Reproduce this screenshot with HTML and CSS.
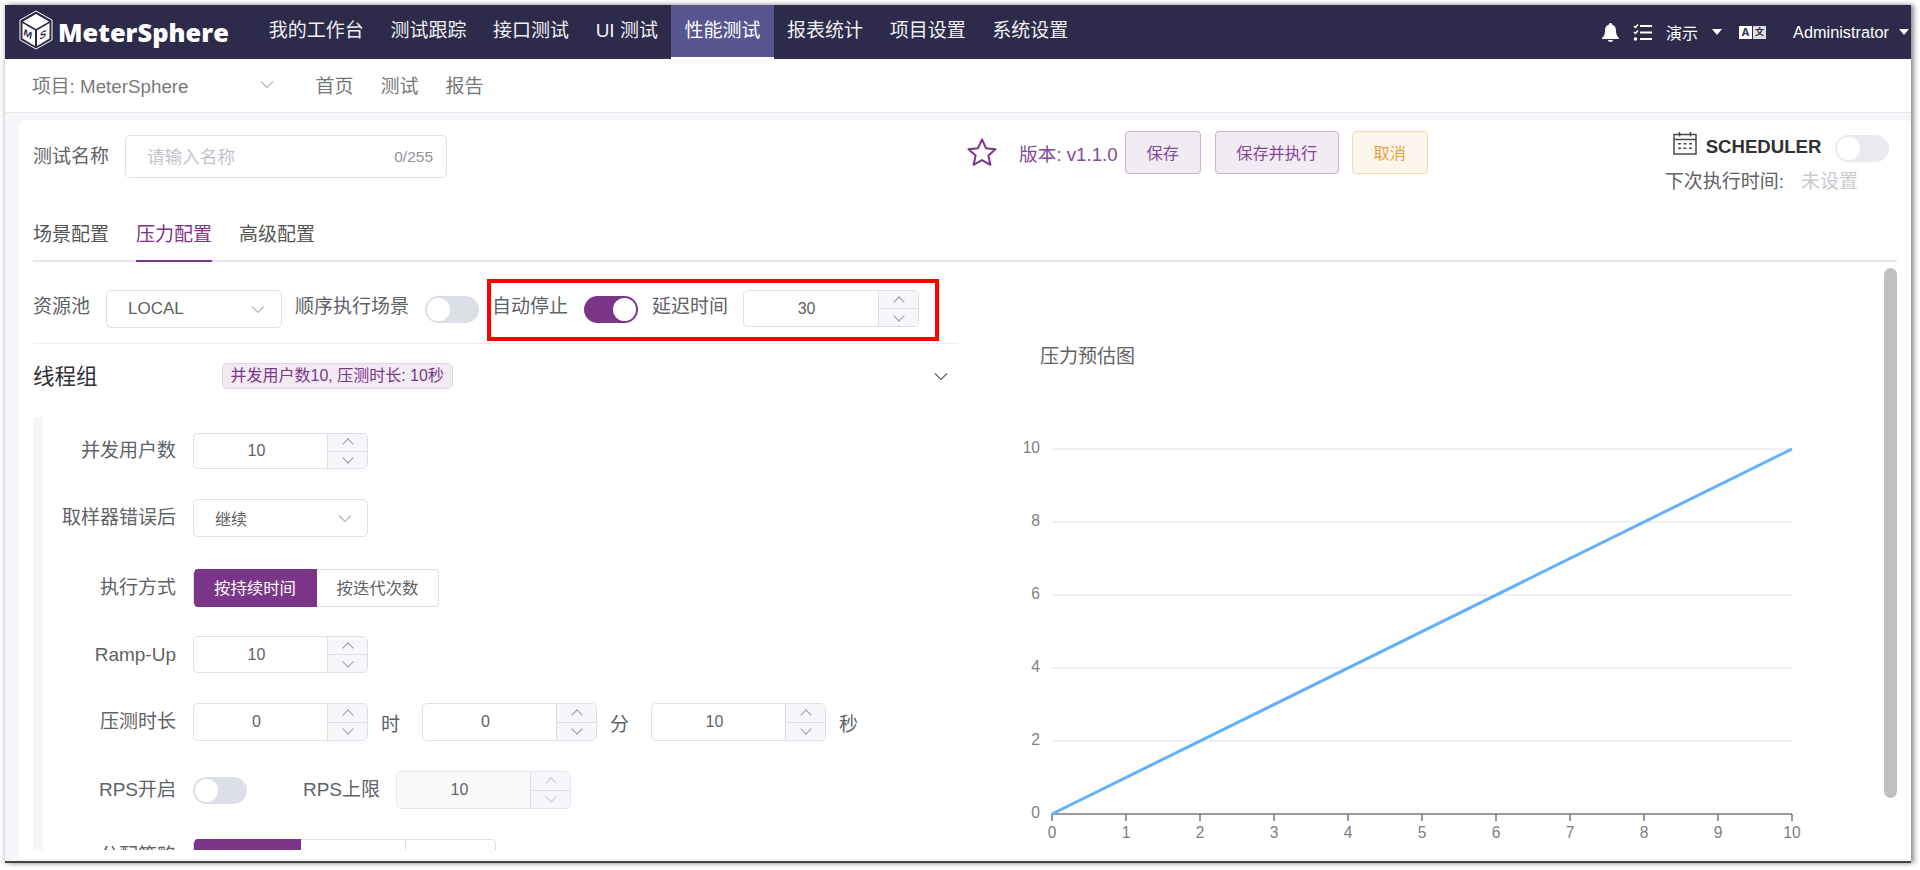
FILE: index.html
```html
<!DOCTYPE html>
<html lang="zh-CN">
<head>
    <meta charset="UTF-8">
    <title>MeterSphere</title>
    <link rel="stylesheet" href="styles.css">
</head>
<body>
<div class="window">

    <!-- Barra superior -->
    <header class="topbar">
        <div class="logo">
            <svg class="logo-icon" viewBox="0 0 36 40" width="36" height="40">
                <path d="M18 1 34 10V30L18 39 2 30V10Z" fill="none" stroke="#fff" stroke-width="1"/>
                <path d="M18 4 31 11.500 18 19 5 11.500Z" fill="#fff"/>
                <path d="M4.500 13 17 20.500V36L4.500 28.500Z" fill="#fff"/>
                <path d="M19 20.500 31.500 13V28.500L19 36Z" fill="#fff"/>
                <text class="logo-letter" transform="matrix(1 .55 0 1 5.500 25)">M</text>
                <text class="logo-letter" transform="matrix(1 -.55 0 1 21.500 30)">S</text>
            </svg>
            <span class="logo-text">MeterSphere</span>
        </div>
        <nav class="main-nav">
            <a href="#">我的工作台</a>
            <a href="#">测试跟踪</a>
            <a href="#">接口测试</a>
            <a href="#">UI 测试</a>
            <a href="#" class="active">性能测试</a>
            <a href="#">报表统计</a>
            <a href="#">项目设置</a>
            <a href="#">系统设置</a>
        </nav>
        <div class="topbar-right">
            <svg class="icon-bell" viewBox="0 0 17 19" width="17" height="19">
                <path d="M8.500 0C9.500 0 10 .7 10 1.600 12.800 2.400 14 4.800 14 7.500 14 11 15 13.500 17 15V16H0V15C2 13.500 3 11 3 7.500 3 4.800 4.200 2.400 7 1.600 7 .7 7.500 0 8.500 0Z" fill="#fff"/>
                <path d="M6 17H11C11 18.200 9.800 19 8.500 19S6 18.200 6 17Z" fill="#fff"/>
            </svg>
            <svg class="icon-tasks" viewBox="0 0 19 17" width="19" height="17">
                <path d="M1 2 2.500 3.500 5 .5M1 8 2.500 9.500 5 6.500" fill="none" stroke="#fff" stroke-width="1.500"/>
                <circle cx="2.500" cy="15" r="1.800" fill="#fff"/>
                <path d="M7 1H19V3H7ZM7 7.500H19V9.500H7ZM7 14H19V16H7Z" fill="#fff"/>
            </svg>
            <span class="workspace">演示</span>
            <i class="caret"></i>
            <span class="lang-icon"><b>A</b><b class="lang-dark">文</b></span>
            <span class="user">Administrator</span>
            <i class="caret"></i>
        </div>
    </header>

    <!-- Barra do projeto -->
    <div class="subbar">
        <div class="project">
            <span>项目: MeterSphere</span>
            <svg class="chevron" viewBox="0 0 14 7" width="14" height="7"><path d="M1 .5 7 6.500 13 .5"/></svg>
        </div>
        <a href="#">首页</a>
        <a href="#">测试</a>
        <a href="#">报告</a>
    </div>

    <div class="page">
        <div class="card">

            <div class="head">
                <span class="label">测试名称</span>
                <div class="name-input">
                    <span class="placeholder">请输入名称</span>
                    <span class="count">0/255</span>
                </div>
                <svg class="star" viewBox="0 0 30 28" width="30" height="28">
                    <path d="M15 1.500 19 10.200 28.500 11.200 21.400 17.600 23.400 26.800 15 22.100 6.600 26.800 8.600 17.600 1.500 11.200 11 10.200Z" fill="none" stroke="#7b3589" stroke-width="2" stroke-linejoin="round"/>
                </svg>
                <span class="version">版本: v1.1.0</span>
                <button class="btn btn-save">保存</button>
                <button class="btn btn-run">保存并执行</button>
                <button class="btn btn-cancel">取消</button>
                <div class="scheduler">
                    <div class="scheduler-top">
                        <svg class="calendar" viewBox="0 0 24 24" width="24" height="24">
                            <path d="M1 3.500H23V23H1ZM1 8.500H23M6.500 1V5.500M17.500 1V5.500" fill="none" stroke="#4a4a4a" stroke-width="1.500"/>
                            <path d="M5 12H8V13.500H5ZM10.500 12H13.500V13.500H10.500ZM16 12H19V13.500H16ZM5 16.500H8V18H5ZM10.500 16.500H13.500V18H10.500ZM16 16.500H19V18H16Z" fill="#4a4a4a"/>
                        </svg>
                        <b class="scheduler-title">SCHEDULER</b>
                        <span class="switch switch-light"></span>
                    </div>
                    <div class="next-run">下次执行时间:<span>未设置</span></div>
                </div>
            </div>

            <div class="tabs">
                <a href="#">场景配置</a>
                <a href="#" class="active">压力配置</a>
                <a href="#">高级配置</a>
            </div>

            <div class="body">
                <div class="left">
                    <div class="pool-row">
                        <span class="label">资源池</span>
                        <div class="select select-pool">LOCAL<svg class="chevron" viewBox="0 0 14 7" width="14" height="7"><path d="M1 .5 7 6.500 13 .5"/></svg></div>
                        <span class="label">顺序执行场景</span>
                        <span class="switch"></span>
                        <span class="label">自动停止</span>
                        <span class="switch on"></span>
                        <span class="label">延迟时间</span>
                        <div class="number">
                            <span class="value">30</span>
                            <span class="spin"><i class="up"></i><i class="down"></i></span>
                        </div>
                        <div class="highlight"></div>
                    </div>

                    <div class="group-head">
                        <span class="group-title">线程组</span>
                        <span class="tag">并发用户数10, 压测时长: 10秒</span>
                        <svg class="chevron" viewBox="0 0 14 7" width="14" height="7"><path d="M1 .5 7 6.500 13 .5"/></svg>
                    </div>

                    <div class="form">
                        <div class="row row-users">
                            <label>并发用户数</label>
                            <div class="number"><span class="value">10</span><span class="spin"><i class="up"></i><i class="down"></i></span></div>
                        </div>
                        <div class="row row-error">
                            <label>取样器错误后</label>
                            <div class="select select-form">继续<svg class="chevron" viewBox="0 0 14 7" width="14" height="7"><path d="M1 .5 7 6.500 13 .5"/></svg></div>
                        </div>
                        <div class="row row-mode">
                            <label>执行方式</label>
                            <div class="radio">
                                <span class="on w-124">按持续时间</span>
                                <span class="w-122">按迭代次数</span>
                            </div>
                        </div>
                        <div class="row row-ramp">
                            <label>Ramp-Up</label>
                            <div class="number"><span class="value">10</span><span class="spin"><i class="up"></i><i class="down"></i></span></div>
                        </div>
                        <div class="row row-time">
                            <label>压测时长</label>
                            <div class="number"><span class="value">0</span><span class="spin"><i class="up"></i><i class="down"></i></span></div>
                            <span class="unit">时</span>
                            <div class="number"><span class="value">0</span><span class="spin"><i class="up"></i><i class="down"></i></span></div>
                            <span class="unit">分</span>
                            <div class="number"><span class="value">10</span><span class="spin"><i class="up"></i><i class="down"></i></span></div>
                            <span class="unit">秒</span>
                        </div>
                        <div class="row row-rps">
                            <label>RPS开启</label>
                            <span class="switch"></span>
                            <label class="rps-limit">RPS上限</label>
                            <div class="number disabled"><span class="value">10</span><span class="spin"><i class="up"></i><i class="down"></i></span></div>
                        </div>
                        <div class="row row-strategy">
                            <label>分配策略</label>
                            <div class="radio">
                                <span class="on w-108"></span>
                                <span class="w-105"></span>
                                <span class="w-90"></span>
                            </div>
                        </div>
                    </div>
                </div>

                <div class="right">
                    <div class="chart-title">压力预估图</div>
                    <svg class="chart" viewBox="0 0 860 450" width="860" height="450">
                        <g class="grid">
                            <line x1="92" y1="52" x2="832" y2="52"/>
                            <line x1="92" y1="125" x2="832" y2="125"/>
                            <line x1="92" y1="198" x2="832" y2="198"/>
                            <line x1="92" y1="271" x2="832" y2="271"/>
                            <line x1="92" y1="344" x2="832" y2="344"/>
                        </g>
                        <g class="y-labels">
                            <text x="80" y="56">10</text>
                            <text x="80" y="129">8</text>
                            <text x="80" y="202">6</text>
                            <text x="80" y="275">4</text>
                            <text x="80" y="348">2</text>
                            <text x="80" y="421">0</text>
                        </g>
                        <path class="axis" d="M92 417H832M92 417V424M166 417V424M240 417V424M314 417V424M388 417V424M462 417V424M536 417V424M610 417V424M684 417V424M758 417V424M832 417V424"/>
                        <g class="x-labels">
                            <text x="92" y="441">0</text>
                            <text x="166" y="441">1</text>
                            <text x="240" y="441">2</text>
                            <text x="314" y="441">3</text>
                            <text x="388" y="441">4</text>
                            <text x="462" y="441">5</text>
                            <text x="536" y="441">6</text>
                            <text x="610" y="441">7</text>
                            <text x="684" y="441">8</text>
                            <text x="758" y="441">9</text>
                            <text x="832" y="441">10</text>
                        </g>
                        <line class="series" x1="92" y1="417" x2="832" y2="52"/>
                    </svg>
                </div>
                <div class="scrollbar"></div>
            </div>

        </div>
    </div>
</div>
</body>
</html>
```

FILE: styles.css
```css
* {
    box-sizing: border-box;
}

body {
    margin: 0;
    height: 870px;
    overflow: hidden;
    background: #fff;
    font-family: "Liberation Sans", "Noto Sans CJK SC", sans-serif;
    color: #606266;
}

a {
    text-decoration: none;
    color: inherit;
}

/* Janela */
.window {
    margin: 5px 0 0 5px;
    width: 1906px;
    height: 858px;
    background: #fff;
    border-bottom: 2px solid #444;
    box-shadow: 3px 0 5px rgba(0, 0, 0, 0.45), -2px 0 4px rgba(0, 0, 0, 0.12);
    display: flex;
    flex-direction: column;
    overflow: hidden;
}

/* Barra superior */
.topbar {
    height: 54px;
    flex: none;
    background: #2d2a4a;
    color: #fff;
    display: flex;
    align-items: center;
}

.logo {
    width: 250.5px;
    flex: none;
    display: flex;
    align-items: center;
    padding-left: 13px;
}

.logo-icon {
    margin-bottom: 5px;
}

.logo-letter {
    font-family: "Liberation Sans", sans-serif;
    font-weight: 700;
    font-style: italic;
    font-size: 10px;
    fill: #2d2a4a;
}

.logo-text {
    margin-left: 4px;
    font-family: "Open Sans", sans-serif;
    font-weight: 800;
    font-size: 25.4px;
}

.main-nav {
    display: flex;
    height: 100%;
}

.main-nav a {
    padding: 0 13.3px;
    font-size: 19px;
    line-height: 52px;
    color: #f0f0f4;
}

.main-nav a.active {
    background: #585590;
    color: #fff;
    border-bottom: 2px solid #fff;
}

.topbar-right {
    margin-left: auto;
    display: flex;
    align-items: center;
    padding-right: 2px;
}

.icon-tasks {
    margin-left: 14px;
}

.workspace {
    margin-left: 14px;
    font-size: 16px;
}

.caret {
    width: 0;
    height: 0;
    margin-left: 14px;
    border-left: 5px solid transparent;
    border-right: 5px solid transparent;
    border-top: 6px solid #fff;
}

.user + .caret {
    margin-left: 10px;
    border-left-width: 5.5px;
    border-right-width: 5.5px;
}

.lang-icon {
    margin-left: 17px;
    display: flex;
    gap: 1px;
}

.lang-icon b {
    width: 13px;
    height: 13px;
    background: #fff;
    color: #2d2a4a;
    font-size: 11px;
    line-height: 13px;
    text-align: center;
}

.lang-icon .lang-dark {
    font-size: 9px;
    background: #ddd;
}

.user {
    margin-left: 27px;
    font-size: 16.3px;
}

/* Barra do projeto */
.subbar {
    height: 54px;
    flex: none;
    display: flex;
    align-items: center;
    border-bottom: 1px solid #e6e6e6;
    padding: 0 0 2px 27px;
    color: #777;
    font-size: 19px;
}

.project {
    width: 283.5px;
    display: flex;
    align-items: center;
    font-size: 18.8px;
    color: #7a7a7a;
}

.project .chevron {
    margin-left: 71px;
}

.subbar a {
    margin-right: 27px;
}

.chevron {
    flex: none;
    fill: none;
    stroke: #b4b6bc;
    stroke-width: 1.2;
}

/* Cartão */
.page {
    flex: 1;
    min-height: 0;
    background: #f5f6fa;
    padding: 7px 0 2px 14px;
}

.card {
    height: 100%;
    background: #fff;
    border-radius: 6px 6px 0 6px;
    padding-left: 14px;
    position: relative;
    overflow: hidden;
}

.label {
    font-size: 19px;
    color: #606266;
    white-space: nowrap;
}

.head {
    height: 102px;
    display: flex;
    align-items: flex-start;
}

.head > .label {
    margin-top: 21px;
}

.name-input {
    width: 322px;
    height: 43px;
    margin: 15px 0 0 16px;
    border: 1px solid #dcdfe6;
    border-radius: 5px;
    display: flex;
    align-items: center;
    justify-content: space-between;
    padding: 0 13px 0 21px;
}

.placeholder {
    margin-bottom: 2px;
    font-size: 17.6px;
    color: #c0c4cc;
}

.count {
    font-size: 15.5px;
    color: #909399;
}

.star {
    margin: 18px 0 0 520px;
}

.version {
    margin: 19px 0 0 22px;
    font-size: 18.7px;
    color: #84489a;
    white-space: nowrap;
}

.btn {
    height: 43px;
    margin-top: 11px;
    border-radius: 4px;
    font-family: inherit;
    font-size: 16.2px;
    padding: 0 0 2px;
}

.btn-save {
    width: 76px;
    margin-left: 7px;
    background: #f2ebf3;
    border: 1px solid #cbaed3;
    color: #84489a;
}

.btn-run {
    width: 124px;
    margin-left: 14px;
    background: #f2ebf3;
    border: 1px solid #cbaed3;
    color: #84489a;
}

.btn-cancel {
    width: 76px;
    margin-left: 13px;
    background: #fdf6ec;
    border: 1px solid #f5dab1;
    color: #e6a23c;
}

.scheduler {
    margin: 13px 0 0 237px;
    width: 226px;
}

.scheduler-top {
    display: flex;
    align-items: center;
    height: 30px;
    padding-left: 8px;
}

.calendar {
    margin-bottom: 10px;
}

.scheduler-title {
    margin: 0 0 3px 9px;
    font-size: 18.6px;
    color: #303133;
}

.switch {
    display: block;
    flex: none;
    width: 54px;
    height: 27px;
    border-radius: 14px;
    background: #dcdfe6;
    position: relative;
}

.switch::after {
    content: "";
    position: absolute;
    top: 2px;
    left: 2px;
    width: 23px;
    height: 23px;
    border-radius: 50%;
    background: #fff;
}

.switch.on {
    background: #7b3589;
}

.switch.on::after {
    left: 29px;
}

.switch-light {
    margin-left: 14px;
    background: #e9eaef;
}

.next-run {
    margin-top: 5px;
    font-size: 19px;
    line-height: 28px;
    color: #606266;
    white-space: nowrap;
}

.next-run span {
    margin-left: 17px;
    color: #c8cacf;
}

/* Abas */
.tabs {
    width: 1864px;
    height: 40px;
    flex: none;
    display: flex;
    gap: 27px;
    border-bottom: 2px solid #e4e7ed;
    font-size: 19px;
    line-height: 26px;
}

.tabs a {
    display: block;
    height: 40px;
    color: #555;
}

.tabs a.active {
    color: #7b3589;
    border-bottom: 2px solid #7b3589;
}

/* Corpo */
.body {
    display: flex;
    height: 588px;
    position: relative;
}

.left {
    width: 925px;
    flex: none;
    height: 588px;
    overflow: hidden;
}

.pool-row {
    position: relative;
    height: 82px;
    display: flex;
    align-items: flex-start;
    border-bottom: 1px solid #ebeef5;
}

.pool-row .label {
    margin-top: 32px;
    line-height: 26px;
}

.pool-row > .switch {
    margin-top: 34px;
}

.pool-row > .label:nth-child(3) {
    margin-left: 13px;
}

.pool-row > .switch:nth-child(4) {
    margin-left: 16px;
}

.pool-row > .label:nth-child(5) {
    margin-left: 13px;
}

.pool-row > .switch:nth-child(6) {
    margin-left: 16px;
}

.pool-row > .label:nth-child(7) {
    margin-left: 14px;
}

.pool-row .number {
    margin: 28px 0 0 15px;
}

.pool-row .value {
    padding-right: 9px;
}

.select {
    height: 38px;
    border: 1px solid #dcdfe6;
    border-radius: 5px;
    display: flex;
    align-items: center;
    justify-content: space-between;
    color: #606266;
}

.select-pool {
    width: 176px;
    margin: 28px 0 0 16px;
    padding: 0 16px 0 21px;
    font-size: 17px;
}

.select-form {
    width: 175px;
    padding: 0 15px 0 21px;
    font-size: 16px;
}

/* Moldura vermelha sobre a linha */
.highlight {
    position: absolute;
    left: 454px;
    top: 17px;
    width: 452px;
    height: 62px;
    border: 4px solid #f00;
}

.number {
    flex: none;
    width: 176px;
    height: 37px;
    border: 1px solid #dcdfe6;
    border-radius: 5px;
    display: flex;
    align-items: center;
    overflow: hidden;
    background: #fff;
}

.value {
    flex: 1;
    padding-right: 8px;
    text-align: center;
    font-size: 16px;
    color: #606266;
}

.spin {
    width: 40px;
    flex: none;
    align-self: stretch;
    display: flex;
    flex-direction: column;
    background: #f5f7fa;
    border-left: 1px solid #dcdfe6;
}

.spin i {
    flex: 1;
    display: flex;
    align-items: center;
    justify-content: center;
}

.spin .up {
    border-bottom: 1px solid #dcdfe6;
}

.spin i::after {
    content: "";
    width: 7px;
    height: 7px;
    border-left: 1px solid #9a9da4;
    border-top: 1px solid #9a9da4;
}

.spin .up::after {
    transform: translateY(2px) rotate(45deg);
}

.spin .down::after {
    transform: translateY(-2px) rotate(225deg);
}

.disabled {
    background: #fafafa;
    border-color: #e4e7ed;
}

.disabled .spin i::after {
    border-color: #c8cad0;
}

/* Grupo */
.group-head {
    height: 64px;
    display: flex;
    align-items: center;
}

.group-title {
    margin-bottom: 3px;
    font-size: 21.5px;
    color: #303133;
}

.tag {
    margin-left: 124px;
    height: 26px;
    padding: 0 8px;
    border: 1px solid #e4d3e8;
    border-radius: 5px;
    background: #f2ebf3;
    color: #7b3589;
    font-size: 16px;
    line-height: 24px;
    white-space: nowrap;
}

.group-head .chevron {
    margin-left: auto;
    margin-right: 10px;
    stroke: #666;
}

.form {
    height: 433px;
    margin-top: 9px;
    border-left: 10px solid #f5f6fa;
    overflow: hidden;
    padding-top: 16px;
}

.row {
    display: flex;
    align-items: center;
}

.row label {
    width: 150px;
    padding-right: 17px;
    flex: none;
    text-align: right;
    font-size: 19px;
    line-height: 26px;
    color: #606266;
    white-space: nowrap;
}

.row-error {
    margin-top: 30px;
}

.row-mode {
    margin-top: 32px;
}

.row-ramp {
    margin-top: 29px;
}

.row-time {
    margin-top: 30px;
}

.row-rps {
    margin-top: 30px;
}

.row-strategy {
    margin-top: 30px;
    align-items: flex-start;
}

.row-strategy label {
    margin-top: 4px;
}

.row .number {
    width: 175px;
}

.row-users .number {
    height: 36px;
}

.row-time .number,
.row-rps .number {
    height: 38px;
}

.unit {
    width: 54px;
    flex: none;
    padding-left: 13px;
    font-size: 19px;
    color: #606266;
}

.row label.rps-limit {
    width: 132px;
    padding-right: 16px;
    margin-left: 17px;
}

.radio {
    display: flex;
    height: 38px;
    font-size: 16.4px;
    line-height: 36px;
    text-align: center;
    color: #606266;
}

.radio span {
    border: 1px solid #dcdfe6;
    border-left: 0;
    background: #fff;
}

.radio span:first-child {
    border-radius: 5px 0 0 5px;
    border-left: 1px solid #dcdfe6;
}

.radio span:last-child {
    border-radius: 0 5px 5px 0;
}

.radio .on {
    background: #7b3589;
    border-color: #7b3589;
    color: #fff;
}

.w-124 {
    width: 124px;
}

.w-122 {
    width: 122px;
}

.w-108 {
    width: 108px;
}

.w-105 {
    width: 105px;
}

.w-90 {
    width: 90px;
}

/* Gráfico */
.right {
    flex: 1;
    min-width: 0;
}

.chart-title {
    margin: 81px 0 0 82px;
    font-size: 19px;
    line-height: 28px;
    color: #606266;
}

.chart {
    display: block;
    margin: 26px 0 0 2px;
}

.grid line {
    stroke: #e8ebf6;
    stroke-width: 1.5;
}

.axis {
    fill: none;
    stroke: #7a7a7a;
    stroke-width: 1.5;
}

.y-labels text {
    text-anchor: end;
    font-size: 15.6px;
    fill: #808080;
}

.x-labels text {
    text-anchor: middle;
    font-size: 15.6px;
    fill: #808080;
}

.series {
    stroke: #63b0ff;
    stroke-width: 3;
}

.scrollbar {
    position: absolute;
    top: 6px;
    left: 1851px;
    width: 13px;
    height: 530px;
    border-radius: 7px;
    background: #c0c0c0;
}
```
